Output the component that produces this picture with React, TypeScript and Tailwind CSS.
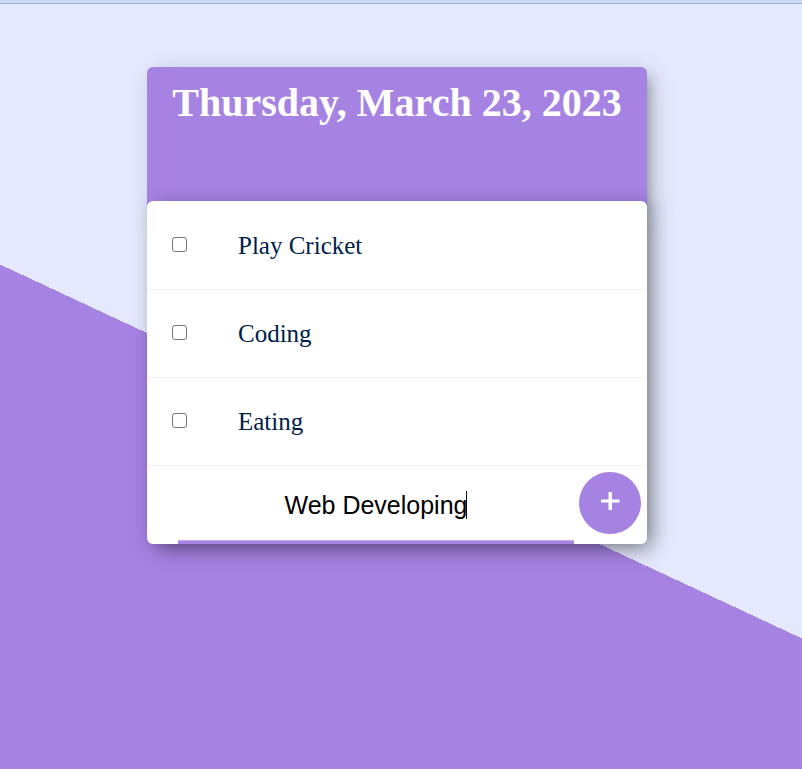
import { useState } from "react";

const items = ["Play Cricket", "Coding", "Eating"];

export default function App() {
  const [draft, setDraft] = useState("Web Developing");

  return (
    <div className="min-h-screen overflow-hidden border-t-[3px] border-[#c9daf8] bg-[#e4e9fd] font-['Liberation_Serif',serif]">
      <div className="h-px bg-[#a0aecb]" />
      <main className="h-[895px] bg-[linear-gradient(25deg,#a683e3_50%,#e4e9fd_50%)] -mb-[130px] pt-[63px] pr-2">
        <header className="mx-auto -mb-3 h-[146px] max-w-[500px] rounded-md bg-[#a683e3] px-3 pt-3 text-center shadow-[6px_6px_12px_-5px_rgba(0,0,0,0.3),6px_6px_25px_0_rgba(0,0,0,0.18)]">
          <h1 className="whitespace-nowrap text-[40px] leading-12 font-bold text-white">Thursday, March 23, 2023</h1>
        </header>
        <section className="mx-auto max-w-[500px] overflow-hidden rounded-md bg-white shadow-[6px_6px_19px_-5px_rgba(0,0,0,0.45),6px_6px_25px_0_rgba(0,0,0,0.18)]">
          <ul className="pt-px">
            {items.map((item) => (
              <li key={item} className="border-b border-[#f1f1f1]">
                <label className="flex h-[87px] items-center pl-[25px] text-[25px] leading-7 text-[#00204a]">
                  <input
                    type="checkbox"
                    className="mr-[51px] mb-0.5 size-[15px] appearance-none rounded-[3px] border border-[#767676] bg-white checked:bg-[#a683e3]"
                  />
                  {item}
                </label>
              </li>
            ))}
          </ul>
          <form className="flex h-[78px] pl-[31px]" onSubmit={(e) => e.preventDefault()}>
            <div className="relative min-w-0 flex-1">
              <input
                type="text"
                aria-label="New item"
                value={draft}
                onChange={(e) => setDraft(e.target.value)}
                className="h-full w-full border-b-3 border-[#a683e3] bg-transparent pt-1 text-center font-['Liberation_Sans',sans-serif] text-[25px] text-black caret-transparent shadow-[inset_0_-1px_0_#c3abec] outline-none"
              />
              <span className="absolute top-[25px] left-[calc(50%+90px)] h-7 w-px bg-black" />
            </div>
            <button
              type="submit"
              aria-label="Add"
              className="mt-1.5 mr-1.5 ml-[5px] flex size-[62px] shrink-0 items-center justify-center rounded-full bg-[#a683e3] text-white"
            >
              <svg viewBox="0 0 20 20" className="mb-1 size-5" fill="currentColor" aria-hidden="true">
                <path d="M8.5 1h3.5v7.5h7.5v3H12v7.5H8.5v-7.5H1v-3h7.5z" />
              </svg>
            </button>
          </form>
        </section>
      </main>
    </div>
  );
}
